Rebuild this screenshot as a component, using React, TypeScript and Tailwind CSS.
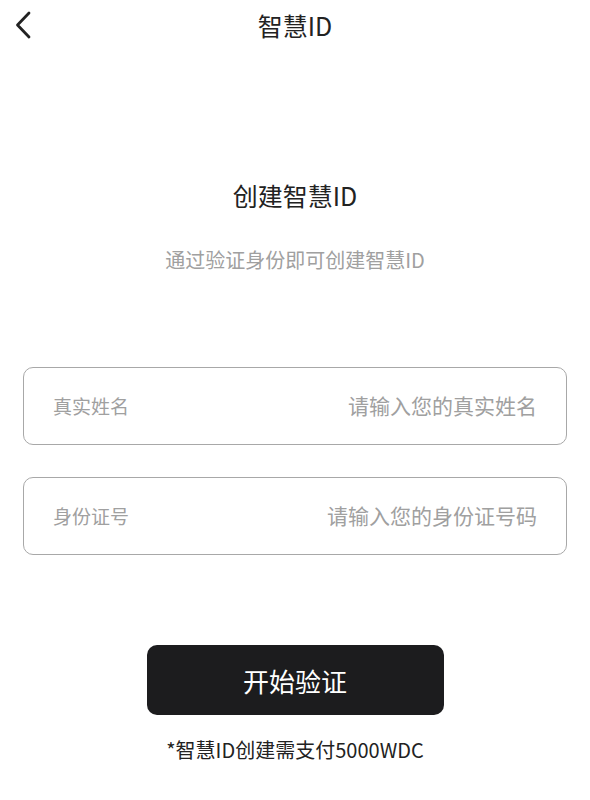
import { useState } from 'react'

const font = "font-['Noto_Sans_CJK_SC','Noto_Sans',sans-serif]"

function Field({ label, placeholder }: { label: string; placeholder: string }) {
  const [value, setValue] = useState('')
  return (
    <label className="flex h-[78px] items-center rounded-[10px] border border-[#a8a8a8] px-[29px]">
      <span className="shrink-0 text-[19px] text-[#a0a0a0]">{label}</span>
      <input
        value={value}
        onChange={(e) => setValue(e.target.value)}
        placeholder={placeholder}
        className="min-w-0 flex-1 bg-transparent text-right text-[21px] text-[#222] outline-none placeholder:text-[#a0a0a0]"
      />
    </label>
  )
}

export default function App() {
  return (
    <div className={`${font} min-h-[800px] w-[590px] bg-white text-[#222]`}>
      <header className="grid h-[50px] grid-cols-[60px_1fr_60px] items-center">
        <button className="flex h-[50px] items-center pl-[14px]">
          <svg width="18" height="28" viewBox="0 0 18 28" fill="none">
            <path d="M15 2 3.5 14 15 26" stroke="#222" strokeWidth="2.8" strokeLinecap="round" strokeLinejoin="round" />
          </svg>
        </button>
        <h1 className="text-center text-[25px] leading-[34px]">智慧ID</h1>
        <div />
      </header>

      <h2 className="mt-[128px] text-center text-[25px] leading-[34px]">创建智慧ID</h2>
      <p className="mt-[35px] text-center text-[20px] leading-[26px] text-[#a0a0a0]">通过验证身份即可创建智慧ID</p>

      <div className="mt-[94px] flex flex-col gap-[32px] px-[23px]">
        <Field label="真实姓名" placeholder="请输入您的真实姓名" />
        <Field label="身份证号" placeholder="请输入您的身份证号码" />
      </div>

      <button className="mx-auto mt-[90px] flex h-[70px] w-[297px] items-center justify-center rounded-[10px] bg-[#1c1c1e] text-[26px] text-white">
        开始验证
      </button>

      <p className="mt-[22px] text-center text-[20px] leading-[26px] text-[#222]">*智慧ID创建需支付5000WDC</p>
    </div>
  )
}
